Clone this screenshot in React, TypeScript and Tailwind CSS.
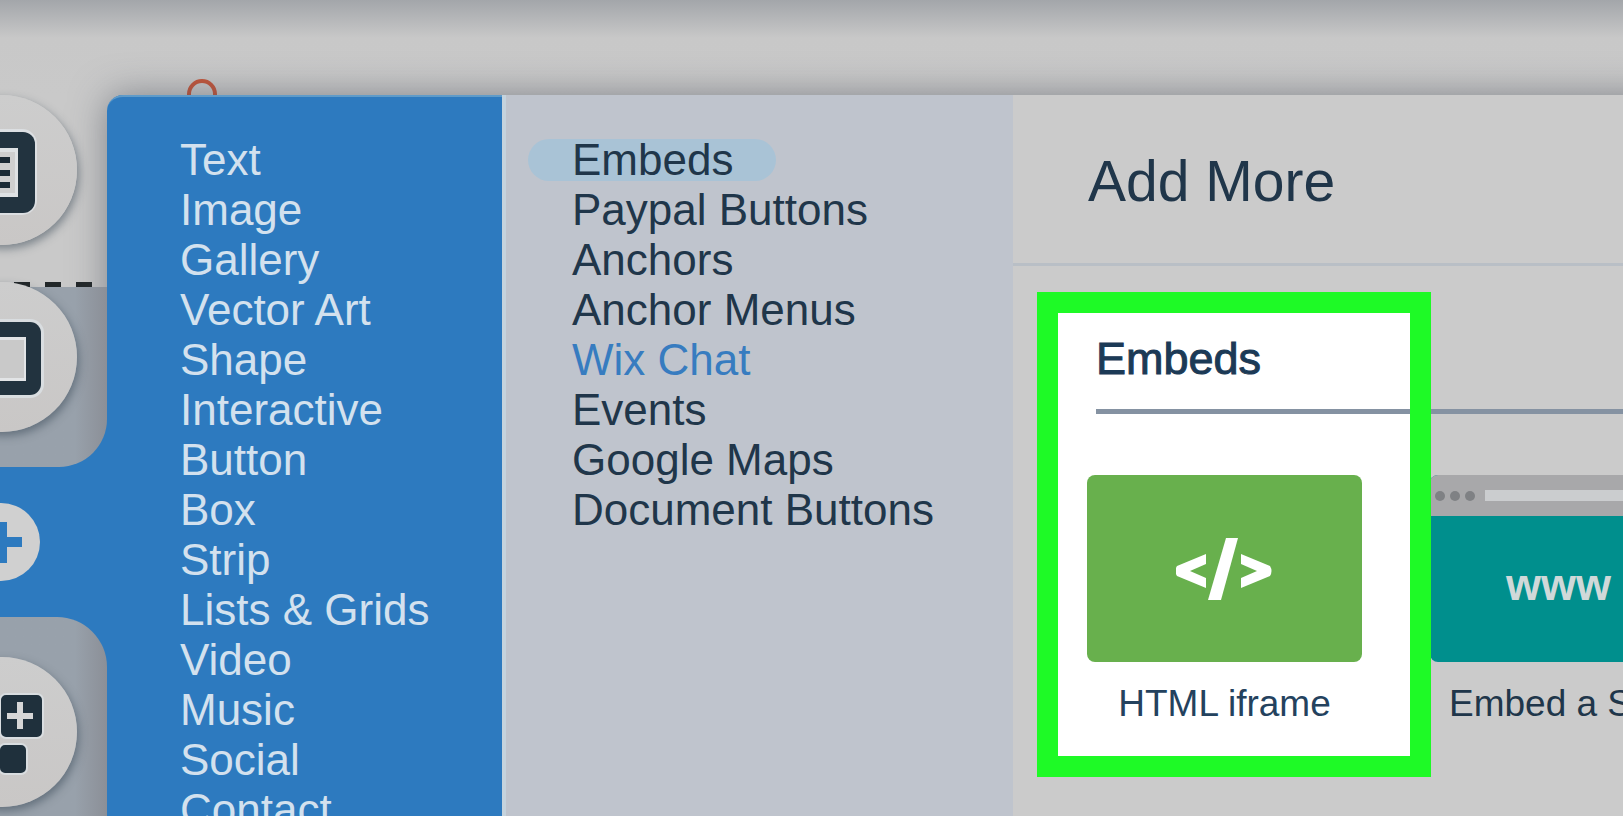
const categories = [
  "Text", "Image", "Gallery", "Vector Art", "Shape", "Interactive", "Button",
  "Box", "Strip", "Lists & Grids", "Video", "Music", "Social", "Contact",
];

const subcategories = [
  "Embeds", "Paypal Buttons", "Anchors", "Anchor Menus", "Wix Chat", "Events",
  "Google Maps", "Document Buttons",
];

const roundButton =
  "relative -ml-[73px] block size-[150px] shrink-0 rounded-full bg-gradient-to-b from-[#cdcdcd] to-[#c9c7c6] shadow-[2px_4px_8px_rgba(50,65,80,0.5)]";

const sectionHeading =
  "relative ml-[83px] h-[80px] border-b-5 border-[#8592a2] text-[45px] text-[#1c3a56] [-webkit-text-stroke:1px_#1c3a56]";

function PageIcon() {
  return (
    <svg className="size-full" viewBox="-75 -75 150 150" aria-hidden="true">
      <rect x="-43" y="-41" width="78" height="86" rx="15" fill="#dcdfe2" />
      <rect x="-41" y="-38" width="74" height="81" rx="12" fill="#22333f" />
      <rect x="-24" y="-22" width="40" height="49" fill="#dfe2e4" />
      <rect x="-20" y="-18" width="33" height="41" fill="#cfcfcf" />
      <path d="M-16 -10H8M-16 3H8M-16 15H8" stroke="#1b2a35" strokeWidth="6" />
    </svg>
  );
}

function BackgroundIcon() {
  return (
    <svg className="size-full" viewBox="-75 -75 150 150" aria-hidden="true">
      <rect x="-49" y="-38" width="91" height="79" rx="14" fill="#d9dde0" />
      <rect x="-46" y="-35" width="85" height="73" rx="11" fill="#22333f" />
      <rect x="-30" y="-20" width="54" height="44" fill="#e2e4e6" />
      <rect x="-28" y="-17" width="50" height="38" fill="#c9c9c9" />
    </svg>
  );
}

function AppsIcon() {
  return (
    <svg className="size-full" viewBox="-75 -75 150 150" aria-hidden="true">
      <g fill="#1f303c" stroke="#d9dde0" strokeWidth="2">
        <rect x="-47" y="-38" width="42" height="44" rx="6" />
        <rect x="-2" y="-38" width="43" height="44" rx="6" />
        <rect x="-33" y="12" width="28" height="30" rx="6" />
        <rect x="-3" y="12" width="28" height="30" rx="6" />
      </g>
      <path d="M5 -16H31M18 -30V-3" stroke="#d6d6d6" strokeWidth="6" />
    </svg>
  );
}

export default function App() {
  return (
    <div
      className="flex h-screen flex-col overflow-hidden bg-[#c9c9c9] text-[44px] leading-[50px] text-[#20364a]"
      style={{ fontFamily: '"Liberation Sans", Arial, sans-serif' }}
    >
      <header className="flex h-[95px] shrink-0 items-end bg-gradient-to-b from-[#a3a6aa] via-[#c8c8c8] via-40% to-[#c9c9c9]">
        <svg className="ml-[186px] h-4 w-8" viewBox="0 0 32 16" aria-hidden="true">
          <circle cx="16" cy="15" r="13" fill="none" stroke="#c5563a" strokeWidth="4" />
        </svg>
      </header>

      <div className="flex min-h-0 flex-1">
        <nav aria-label="Editor tools" className="flex w-[107px] shrink-0 flex-col">
          <div className="flex h-[192px] shrink-0 flex-col justify-between">
            <button type="button" aria-label="Pages" className={roundButton}>
              <PageIcon />
            </button>
            <div className="ml-[14px] flex h-[5px] items-stretch gap-[15px]">
              <span className="w-4 bg-[#222729]" />
              <span className="w-4 bg-[#222729]" />
              <span className="w-4 bg-[#222729]" />
            </div>
          </div>
          <div className="relative shrink-0 bg-[#2d7abf]">
            <div className="flex h-[180px] items-start rounded-br-[48px] bg-gradient-to-r from-[#98a1ab] from-70% to-[#8b8f97]">
              <button type="button" aria-label="Background" className={roundButton + " -mt-[5px]"}>
                <BackgroundIcon />
              </button>
            </div>
            <div className="flex h-[150px] items-center">
              <button type="button" aria-label="Add" className="-ml-[38px] size-[78px] rounded-full bg-[#d0d0d0]">
                <svg className="size-full" viewBox="-39 -39 78 78" aria-hidden="true">
                  <path d="M-21 0H21" stroke="#2d7abf" strokeWidth="10" />
                  <path d="M0 -20V21" stroke="#2d7abf" strokeWidth="12" />
                </svg>
              </button>
            </div>
            <div className="h-[220px] rounded-tr-[50px] bg-gradient-to-r from-[#98a1ab] from-70% to-[#8b8f97] pt-10">
              <button type="button" aria-label="Apps" className={roundButton}>
                <AppsIcon />
              </button>
            </div>
          </div>
        </nav>

        <div className="-mr-12 flex min-w-0 flex-1 rounded-tl-[16px] bg-[#2d7abf] shadow-[0_0_36px_rgba(70,75,85,0.55)]">
          <nav aria-label="Element categories" className="w-[395px] shrink-0 rounded-tl-[16px] border-t-2 border-[#5f9bc9] pt-[38px] pl-[73px] text-[#d3e1ee]">
            <ul>
              {categories.map((name) => (
                <li key={name} className="h-[50px]">
                  <a href="#">{name}</a>
                </li>
              ))}
            </ul>
          </nav>

          <nav aria-label="More elements" className="w-[511px] shrink-0 border-l-4 border-[#c5d3dd] bg-[#bfc4cd] pt-10 pl-[22px]">
            <ul>
              {subcategories.map((name) => (
                <li key={name} className="flex h-[50px] items-center">
                  <a
                    href="#"
                    className={
                      name === "Embeds"
                        ? "flex h-[42px] w-[248px] items-center rounded-full bg-[#a9c3d6] pl-[44px]"
                        : name === "Wix Chat"
                          ? "pl-[44px] text-[#377cc0]"
                          : "pl-[44px]"
                    }
                  >
                    {name}
                  </a>
                </li>
              ))}
            </ul>
          </nav>

          <main className="min-w-0 flex-1 overflow-hidden bg-[#cbcbcb]">
            <h1 className="flex h-[171px] items-center border-b-3 border-[#b9bfc6] pt-1 pl-[75px] text-[57px] leading-[64px]">
              Add More
            </h1>

            <section className="relative h-[543px] pt-[68px]">
              <div className="absolute top-[26px] left-6 h-[485px] w-[394px] bg-white" />
              <h2 className={sectionHeading}>Embeds</h2>
              <div className="relative mt-[61px] flex gap-[68px] pl-[74px]">
                <a href="#" className="w-[275px] shrink-0 text-center text-[37px] leading-[44px] text-[#24425e]">
                  <span className="flex h-[187px] items-center justify-center rounded-[8px] bg-[#68b04d]">
                    <svg className="h-[64px] w-[98px]" viewBox="0 0 98 64" aria-hidden="true">
                      <path d="M50 1H62L45 63H32Z" fill="#fff" />
                      <path
                        d="M30 17V27L14 34L30 41V51L1 39Q-2 34 1 29Z"
                        fill="#fff"
                      />
                      <path
                        d="M65 17V27L81 34L65 41V51L94 39Q97 34 94 29Z"
                        fill="#fff"
                      />
                    </svg>
                  </span>
                  <span className="mt-5 block">HTML iframe</span>
                </a>
                <a href="#" className="w-[275px] shrink-0 text-[37px] leading-[44px] whitespace-nowrap">
                  <span className="block overflow-hidden rounded-[8px] bg-[#008f8d]">
                    <span className="flex h-[41px] items-center gap-[5px] bg-[#a8a8aa] pl-[5px]">
                      <span className="size-[10px] rounded-full bg-[#7f8184]" />
                      <span className="size-[10px] rounded-full bg-[#7f8184]" />
                      <span className="size-[10px] rounded-full bg-[#7f8184]" />
                      <span className="ml-[5px] h-[11px] flex-1 bg-[#cbcdcf]" />
                    </span>
                    <span className="flex h-[146px] items-center pb-2 pl-[76px] text-[45px] font-bold text-[#cfd9d9]">
                      www
                    </span>
                  </span>
                  <span className="mt-5 ml-[19px] block">Embed a Site</span>
                </a>
              </div>
              <div className="pointer-events-none absolute top-[26px] left-6 h-[485px] w-[394px] border-[21px] border-[#1efa26]" />
            </section>

            <section>
              <h2 className={sectionHeading}>Paypal Buttons</h2>
            </section>
          </main>
        </div>
      </div>
    </div>
  );
}
